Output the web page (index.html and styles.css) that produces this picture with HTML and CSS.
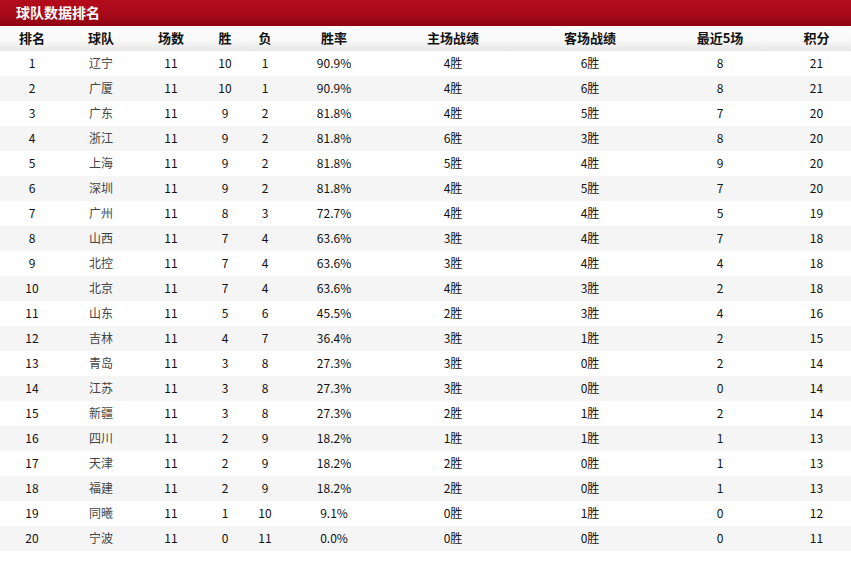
FILE: index.html
```html
<!DOCTYPE html>
<html lang="zh">
<head>
<meta charset="utf-8">
<title>球队数据排名</title>
<link rel="stylesheet" href="styles.css">
</head>
<body>
<div class="panel">
  <div class="title">球队数据排名</div>
  <table class="rank">
    <colgroup>
      <col class="c1"><col class="c2"><col class="c3"><col class="c4"><col class="c5">
      <col class="c6"><col class="c7"><col class="c8"><col class="c9"><col class="c10">
    </colgroup>
    <thead>
      <tr><th>排名</th><th>球队</th><th>场数</th><th>胜</th><th>负</th><th>胜率</th><th>主场战绩</th><th>客场战绩</th><th>最近5场</th><th>积分</th></tr>
    </thead>
    <tbody>
      <tr><td>1</td><td class="team">辽宁</td><td>11</td><td>10</td><td>1</td><td>90.9%</td><td>4胜</td><td>6胜</td><td>8</td><td>21</td></tr>
      <tr><td>2</td><td class="team">广厦</td><td>11</td><td>10</td><td>1</td><td>90.9%</td><td>4胜</td><td>6胜</td><td>8</td><td>21</td></tr>
      <tr><td>3</td><td class="team">广东</td><td>11</td><td>9</td><td>2</td><td>81.8%</td><td>4胜</td><td>5胜</td><td>7</td><td>20</td></tr>
      <tr><td>4</td><td class="team">浙江</td><td>11</td><td>9</td><td>2</td><td>81.8%</td><td>6胜</td><td>3胜</td><td>8</td><td>20</td></tr>
      <tr><td>5</td><td class="team">上海</td><td>11</td><td>9</td><td>2</td><td>81.8%</td><td>5胜</td><td>4胜</td><td>9</td><td>20</td></tr>
      <tr><td>6</td><td class="team">深圳</td><td>11</td><td>9</td><td>2</td><td>81.8%</td><td>4胜</td><td>5胜</td><td>7</td><td>20</td></tr>
      <tr><td>7</td><td class="team">广州</td><td>11</td><td>8</td><td>3</td><td>72.7%</td><td>4胜</td><td>4胜</td><td>5</td><td>19</td></tr>
      <tr><td>8</td><td class="team">山西</td><td>11</td><td>7</td><td>4</td><td>63.6%</td><td>3胜</td><td>4胜</td><td>7</td><td>18</td></tr>
      <tr><td>9</td><td class="team">北控</td><td>11</td><td>7</td><td>4</td><td>63.6%</td><td>3胜</td><td>4胜</td><td>4</td><td>18</td></tr>
      <tr><td>10</td><td class="team">北京</td><td>11</td><td>7</td><td>4</td><td>63.6%</td><td>4胜</td><td>3胜</td><td>2</td><td>18</td></tr>
      <tr><td>11</td><td class="team">山东</td><td>11</td><td>5</td><td>6</td><td>45.5%</td><td>2胜</td><td>3胜</td><td>4</td><td>16</td></tr>
      <tr><td>12</td><td class="team">吉林</td><td>11</td><td>4</td><td>7</td><td>36.4%</td><td>3胜</td><td>1胜</td><td>2</td><td>15</td></tr>
      <tr><td>13</td><td class="team">青岛</td><td>11</td><td>3</td><td>8</td><td>27.3%</td><td>3胜</td><td>0胜</td><td>2</td><td>14</td></tr>
      <tr><td>14</td><td class="team">江苏</td><td>11</td><td>3</td><td>8</td><td>27.3%</td><td>3胜</td><td>0胜</td><td>0</td><td>14</td></tr>
      <tr><td>15</td><td class="team">新疆</td><td>11</td><td>3</td><td>8</td><td>27.3%</td><td>2胜</td><td>1胜</td><td>2</td><td>14</td></tr>
      <tr><td>16</td><td class="team">四川</td><td>11</td><td>2</td><td>9</td><td>18.2%</td><td>1胜</td><td>1胜</td><td>1</td><td>13</td></tr>
      <tr><td>17</td><td class="team">天津</td><td>11</td><td>2</td><td>9</td><td>18.2%</td><td>2胜</td><td>0胜</td><td>1</td><td>13</td></tr>
      <tr><td>18</td><td class="team">福建</td><td>11</td><td>2</td><td>9</td><td>18.2%</td><td>2胜</td><td>0胜</td><td>1</td><td>13</td></tr>
      <tr><td>19</td><td class="team">同曦</td><td>11</td><td>1</td><td>10</td><td>9.1%</td><td>0胜</td><td>1胜</td><td>0</td><td>12</td></tr>
      <tr><td>20</td><td class="team">宁波</td><td>11</td><td>0</td><td>11</td><td>0.0%</td><td>0胜</td><td>0胜</td><td>0</td><td>11</td></tr>
    </tbody>
  </table>
</div>
</body>
</html>
```
FILE: styles.css
```css
html, body {
  margin: 0;
  padding: 0;
  background: #fff;
}
body {
  font-family: "Noto Sans CJK SC", "Noto Sans", sans-serif;
  color: #111;
}
.panel {
  width: 851px;
}
.title {
  height: 26px;
  line-height: 25px;
  padding-left: 16px;
  color: #fff;
  font-size: 14px;
  font-weight: bold;
  background: linear-gradient(to bottom, #b30c1c 0%, #a80a1a 50%, #8e0612 100%);
}
.rank {
  width: 851px;
  border-collapse: collapse;
  table-layout: fixed;
}
.c1 { width: 64px; }
.c2 { width: 74px; }
.c3 { width: 66px; }
.c4 { width: 42px; }
.c5 { width: 38px; }
.c6 { width: 100px; }
.c7 { width: 138px; }
.c8 { width: 136px; }
.c9 { width: 124px; }
.c10 { width: 69px; }
.rank th {
  height: 24px;
  padding: 0 0 1px;
  line-height: 16px;
  font-size: 13px;
  font-weight: bold;
  color: #111;
  text-align: center;
  background: linear-gradient(to bottom, #ffffff 0%, #f7f7f7 60%, #e6e6e6 100%);
}
.rank td {
  height: 24px;
  padding: 0 0 1px;
  line-height: 16px;
  font-size: 12px;
  text-align: center;
  color: #111;
}
.rank td.team {
  color: #444;
}
.rank tbody tr:nth-child(even) td {
  background: #f5f5f5;
}
```
